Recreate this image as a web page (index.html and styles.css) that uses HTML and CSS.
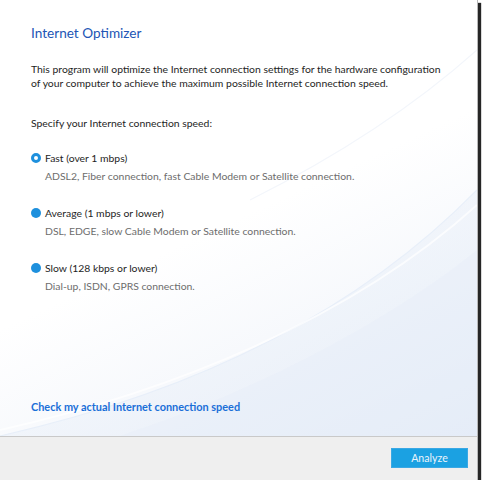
FILE: index.html
```html
<!DOCTYPE html>
<html lang="en">
<head>
    <meta charset="UTF-8">
    <meta name="viewport" content="width=device-width, initial-scale=1.0">
    <title>Internet Optimizer</title>
    <link rel="stylesheet" href="styles.css">
</head>
<body>
    <div class="dialog">
        <div class="content">
            <!-- decorative swoosh behind the page -->
            <svg class="swoosh" viewBox="0 0 477 436" preserveAspectRatio="none" aria-hidden="true">
                <defs>
                    <linearGradient id="sweep" x1="0" y1="0" x2="1" y2="1">
                        <stop offset="0" stop-color="#f7f9fd"/>
                        <stop offset="1" stop-color="#e1eaf6"/>
                    </linearGradient>
                </defs>
                <path d="M0,436 C160,400 340,330 477,190 L477,436 Z" fill="url(#sweep)" opacity="0.6"/>
                <path d="M120,436 C260,390 390,320 477,250 L477,436 Z" fill="#e6eef8" opacity="0.45"/>
                <path d="M0,436 C160,400 340,330 477,190" fill="none" stroke="#e8eff9" stroke-width="1.2"/>
                <path d="M0,430 C170,392 350,320 477,205" fill="none" stroke="#ffffff" stroke-width="2" opacity="0.7"/>
                <path d="M250,200 C330,160 410,110 477,50" fill="none" stroke="#f3f6fb" stroke-width="1.2"/>
            </svg>

            <h1 class="title">Internet Optimizer</h1>
            <p class="intro">This program will optimize the Internet connection settings for the hardware configuration of your computer to achieve the maximum possible Internet connection speed.</p>

            <p class="prompt">Specify your Internet connection speed:</p>

            <div class="options">
                <label class="option">
                    <span class="option-head">
                        <span class="radio radio-checked"></span>
                        <span class="option-name">Fast (over 1 mbps)</span>
                    </span>
                    <span class="option-desc">ADSL2, Fiber connection, fast Cable Modem or Satellite connection.</span>
                </label>
                <label class="option">
                    <span class="option-head">
                        <span class="radio"></span>
                        <span class="option-name">Average (1 mbps or lower)</span>
                    </span>
                    <span class="option-desc">DSL, EDGE, slow Cable Modem or Satellite connection.</span>
                </label>
                <label class="option">
                    <span class="option-head">
                        <span class="radio"></span>
                        <span class="option-name">Slow (128 kbps or lower)</span>
                    </span>
                    <span class="option-desc">Dial-up, ISDN, GPRS connection.</span>
                </label>
            </div>

            <a class="check-link" href="#">Check my actual Internet connection speed</a>
        </div>
        <div class="footer">
            <button class="btn">Analyze</button>
        </div>
    </div>
</body>
</html>
```

FILE: styles.css
```css
body {
    margin: 0;
    padding: 0;
    background: #fff;
    font-family: 'Lato', sans-serif;
    font-size: 10.4px;
    color: #1e1e1e;
}

.dialog {
    width: 477px;
    height: 480px;
    display: flex;
    flex-direction: column;
    border-right: 1px solid #b8b8b8;
    box-shadow: 3px 3px 1px rgba(0, 0, 0, 0.85);
    background: #fff;
}

.content {
    flex: 1;
    position: relative;
    padding: 0 31px;
    display: flex;
    flex-direction: column;
    background: linear-gradient(155deg, #fff 50%, #f3f6fb 80%, #e8eff8);
}

.swoosh {
    position: absolute;
    left: 0;
    top: 0;
    width: 100%;
    height: 100%;
}

.title,
.intro,
.prompt,
.options,
.check-link {
    position: relative;
}

.title {
    margin: 24px 0 0;
    font-size: 13.6px;
    font-weight: normal;
    color: #2155b5;
    line-height: 18px;
}

.intro {
    margin: 20px 0 0;
    line-height: 14px;
}

.prompt {
    margin: 26px 0 0;
    line-height: 14px;
}

.options {
    margin-top: 21px;
    display: flex;
    flex-direction: column;
    gap: 23px;
}

.option {
    display: flex;
    flex-direction: column;
    gap: 4px;
    line-height: 14px;
}

.option-head {
    display: flex;
    align-items: center;
    gap: 4px;
}

.radio {
    width: 10px;
    height: 10px;
    border-radius: 50%;
    background: #1e90dd;
    box-sizing: border-box;
}

.radio-checked {
    background: #fff;
    border: 3px solid #1e90dd;
}

.option-desc {
    padding-left: 14px;
    color: #6d6d6d;
}

.check-link {
    margin-top: auto;
    margin-bottom: 22px;
    color: #1a6fd8;
    font-size: 10.9px;
    font-weight: bold;
    text-decoration: none;
    line-height: 14px;
}

.footer {
    height: 44px;
    border-top: 1px solid #c9c9c9;
    background: #efefef;
    display: flex;
    justify-content: flex-end;
    align-items: flex-start;
    padding: 11px 9px 0 0;
    box-sizing: border-box;
}

.btn {
    width: 77px;
    height: 20px;
    border: 1px solid #3aa8e4;
    background: #1ba1e2;
    color: #eaf4fb;
    font-family: 'Lato', sans-serif;
    font-size: 10.6px;
    padding: 0;
}
```
